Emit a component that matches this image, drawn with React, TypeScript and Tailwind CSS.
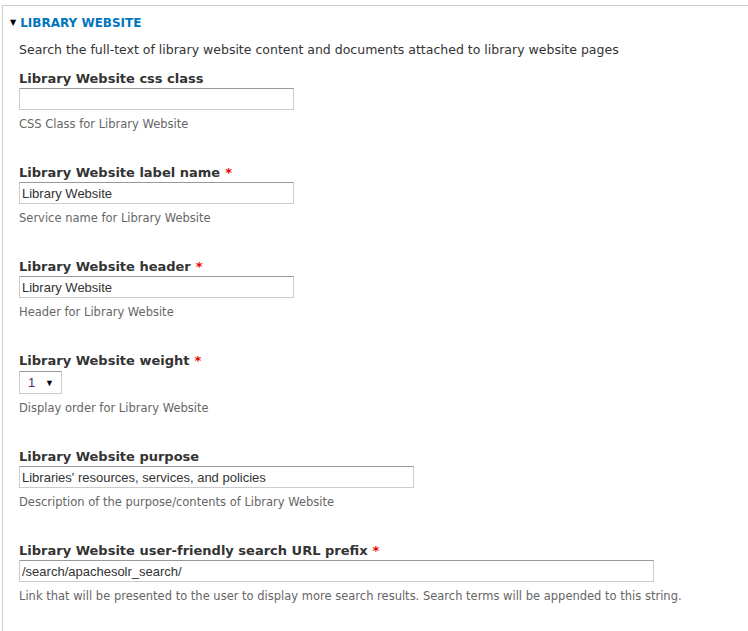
import React from "react";

const labelCls = "block text-[13px] font-bold text-[#333] leading-[16px] [font-family:'DejaVu_Sans',sans-serif]";
const descCls = "text-[11.5px] text-[#666] leading-[16px] [font-family:'DejaVu_Sans',sans-serif]";
const inputCls =
  "h-[22px] border border-[#ccc] border-t-[#999] bg-white px-[2px] text-[13px] text-[#333] [font-family:'Liberation_Sans',Arial,sans-serif] outline-none";

function Req() {
  return <span className="text-[#e00] ml-[5px]">*</span>;
}

function Field({
  label,
  required,
  value,
  width,
  desc,
}: {
  label: string;
  required?: boolean;
  value: string;
  width: string;
  desc: string;
}) {
  return (
    <div className="flex flex-col">
      <label className={labelCls}>
        {label}
        {required && <Req />}
      </label>
      <input readOnly value={value} className={`${inputCls} ${width} mt-[1px]`} />
      <div className={`${descCls} mt-[6px]`}>{desc}</div>
    </div>
  );
}

export default function App() {
  return (
    <div className="w-[748px] h-[631px] bg-white overflow-hidden pt-[5px] pl-[2px]">
      <div className="border-l border-t border-[#ccc] h-full pl-[7px] pt-[9px]">
        <div className="flex items-center gap-[4px] text-[12px] font-bold text-[#0074bd] leading-[16px] [font-family:'DejaVu_Sans',sans-serif]">
          <span className="text-[8px] text-black">▼</span>
          <span>LIBRARY WEBSITE</span>
        </div>
        <div className="pl-[9px]">
          <div className="text-[12.5px] text-[#333] leading-[16px] [font-family:'DejaVu_Sans',sans-serif] mt-[11px]">
            Search the full-text of library website content and documents attached to library website pages
          </div>
          <div className="flex flex-col gap-[33px] mt-[13px]">
            <Field label="Library Website css class" value="" width="w-[275px]" desc="CSS Class for Library Website" />
            <Field label="Library Website label name" required value="Library Website" width="w-[275px]" desc="Service name for Library Website" />
            <Field label="Library Website header" required value="Library Website" width="w-[275px]" desc="Header for Library Website" />
            <div className="flex flex-col">
              <label className={labelCls}>
                Library Website weight
                <Req />
              </label>
              <div className="mt-[2px] w-[43px] h-[23px] border border-[#ccc] border-t-[#999] flex items-center justify-between pl-[8px] pr-[7px]">
                <span className="text-[13px] text-[#4a2a7a] [font-family:'Liberation_Sans',Arial,sans-serif]">1</span>
                <span className="text-[9px] text-black">▼</span>
              </div>
              <div className={`${descCls} mt-[6px]`}>Display order for Library Website</div>
            </div>
            <Field label="Library Website purpose" value="Libraries' resources, services, and policies" width="w-[395px]" desc="Description of the purpose/contents of Library Website" />
            <Field label="Library Website user-friendly search URL prefix" required value="/search/apachesolr_search/" width="w-[635px]" desc="Link that will be presented to the user to display more search results. Search terms will be appended to this string." />
          </div>
        </div>
      </div>
    </div>
  );
}
